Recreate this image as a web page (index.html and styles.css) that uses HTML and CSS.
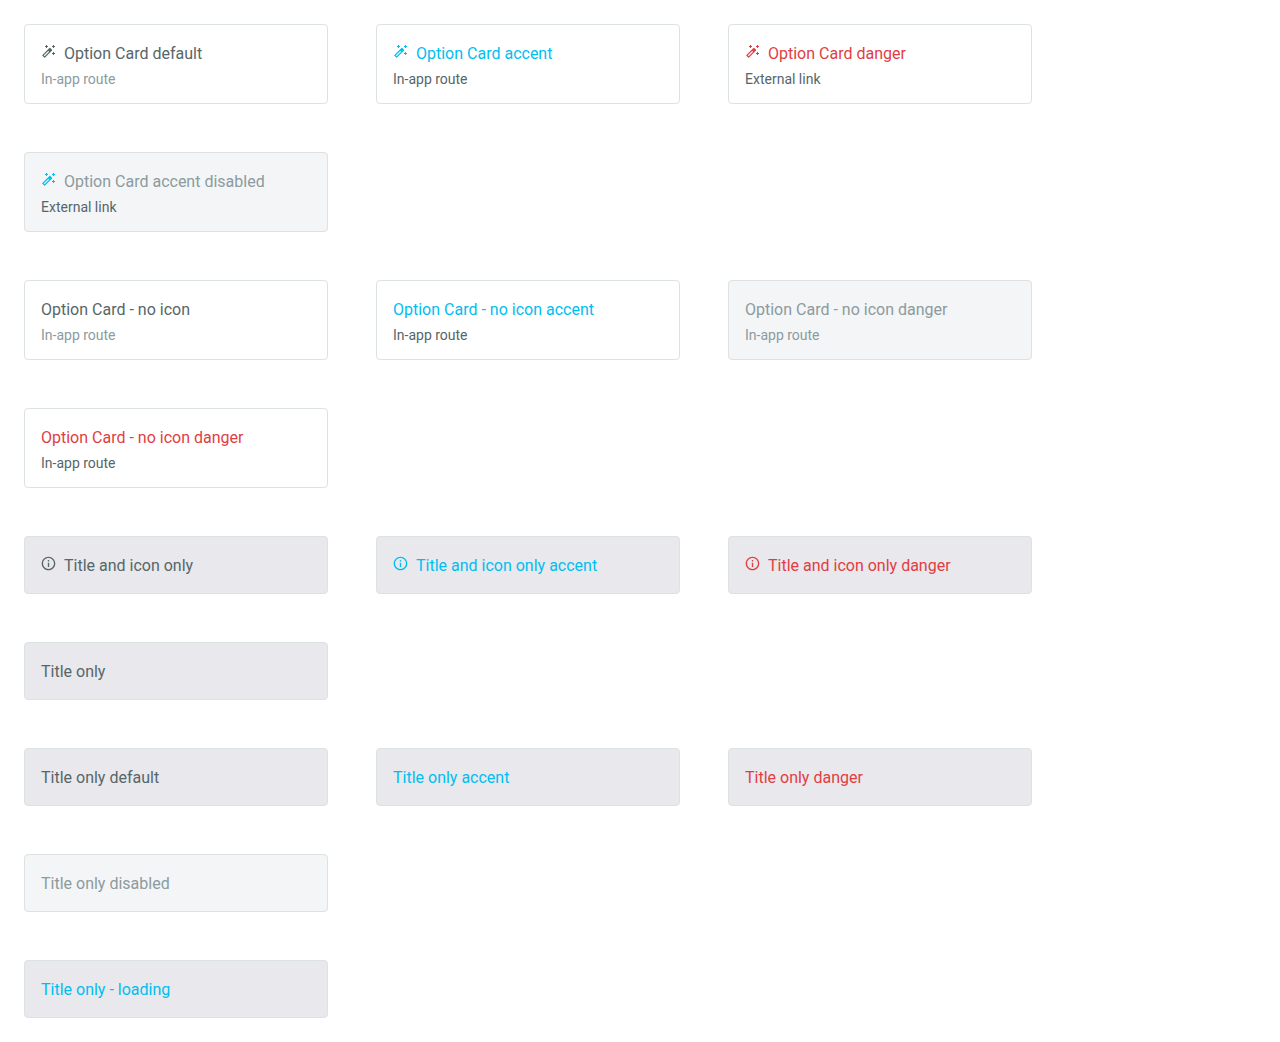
FILE: index.html
```html
<!DOCTYPE html>
<html lang="en">
<head>
<meta charset="utf-8">
<title>Option Cards</title>
<link rel="stylesheet" href="styles.css">
</head>
<body>
<svg class="sprite" aria-hidden="true">
  <symbol id="wand" viewBox="0 0 24 24">
    <path d="M17.710 9.120l-2.830-2.830C14.680 6.100 14.430 6 14.170 6c-.26 0-.51.1-.71.290L2.290 17.460c-.39.39-.39 1.020 0 1.410l2.830 2.830c.2.200.45.300.71.300s.51-.1.710-.290l11.170-11.170c.39-.39.39-1.030 0-1.420zM5.830 19.590l-1.410-1.410L11.590 11 13 12.410l-7.170 7.180z"/>
    <path d="M8 1.600h1.600v1.600h1.600v1.600H9.600v1.600H8V4.800H6.400V3.200H8zM19.200 1.600h1.600v1.600h1.600v1.600h-1.600v1.600h-1.600V4.800h-1.600V3.200h1.600zM19.200 12.800h1.600v1.600h1.600V16h-1.600v1.600h-1.600V16h-1.600v-1.600h1.600z"/>
  </symbol>
  <symbol id="info" viewBox="1 1 22 22"><path d="M11 7h2v2h-2zm0 4h2v6h-2zm1-9C6.480 2 2 6.480 2 12s4.480 10 10 10 10-4.480 10-10S17.520 2 12 2zm0 18c-4.410 0-8-3.590-8-8s3.590-8 8-8 8 3.590 8 8-3.590 8-8 8z"/></symbol>
</svg>
<main class="board">
  <div class="row">
    <a class="card" href="#"><span class="title"><svg class="icon"><use href="#wand"/></svg>Option Card default</span><span class="text muted">In-app route</span></a>
    <a class="card accent" href="#"><span class="title"><svg class="icon"><use href="#wand"/></svg>Option Card accent</span><span class="text">In-app route</span></a>
    <a class="card danger" href="#"><span class="title"><svg class="icon"><use href="#wand"/></svg>Option Card danger</span><span class="text">External link</span></a>
  </div>
  <div class="row">
    <a class="card accent disabled" href="#" aria-disabled="true"><span class="title"><svg class="icon"><use href="#wand"/></svg>Option Card accent disabled</span><span class="text">External link</span></a>
  </div>
  <div class="row">
    <a class="card" href="#"><span class="title">Option Card - no icon</span><span class="text muted">In-app route</span></a>
    <a class="card accent" href="#"><span class="title">Option Card - no icon accent</span><span class="text">In-app route</span></a>
    <a class="card disabled" href="#" aria-disabled="true"><span class="title">Option Card - no icon danger</span><span class="text muted">In-app route</span></a>
  </div>
  <div class="row">
    <a class="card danger" href="#"><span class="title">Option Card - no icon danger</span><span class="text">In-app route</span></a>
  </div>
  <div class="row">
    <button class="card filled" type="button"><span class="title"><svg class="icon"><use href="#info"/></svg>Title and icon only</span></button>
    <button class="card filled accent" type="button"><span class="title"><svg class="icon"><use href="#info"/></svg>Title and icon only accent</span></button>
    <button class="card filled danger" type="button"><span class="title"><svg class="icon"><use href="#info"/></svg>Title and icon only danger</span></button>
  </div>
  <div class="row">
    <button class="card filled" type="button"><span class="title">Title only</span></button>
  </div>
  <div class="row">
    <button class="card filled" type="button"><span class="title">Title only default</span></button>
    <button class="card filled accent" type="button"><span class="title">Title only accent</span></button>
    <button class="card filled danger" type="button"><span class="title">Title only danger</span></button>
  </div>
  <div class="row">
    <button class="card disabled" type="button" disabled><span class="title">Title only disabled</span></button>
  </div>
  <div class="row">
    <button class="card filled accent" type="button" aria-busy="true"><span class="title">Title only - loading</span></button>
  </div>
</main>
</body>
</html>
```
FILE: styles.css
```css
* {
  box-sizing: border-box;
}

body {
  margin: 0;
  background: #fff;
  font-family: Roboto, sans-serif;
}

.sprite {
  display: none;
}

.board {
  display: flex;
  flex-direction: column;
  gap: 48px;
  padding: 24px;
}

.row {
  display: flex;
  flex-wrap: wrap;
  gap: 48px;
}

.card {
  display: flex;
  flex-direction: column;
  width: 304px;
  max-width: 100%;
  padding: 16px 16px 14px;
  border: 1px solid #dce1e2;
  border-radius: 4px;
  background: #fff;
  color: #566669;
  font: inherit;
  text-align: left;
  text-decoration: none;
  cursor: pointer;
}

.title {
  display: flex;
  gap: 8px;
  font-size: 16px;
  line-height: 26px;
}

.text {
  padding-top: 2px;
  color: #566669;
  font-size: 14px;
  line-height: 20px;
}

.text.muted {
  color: #8b9b9e;
}

.icon {
  width: 15px;
  height: 15px;
  margin-top: 3px;
  fill: currentColor;
}

.accent {
  color: #00bef0;
}

.danger {
  color: #e23d42;
}

.filled {
  background: #e8e8ed;
}

.disabled {
  background: #f4f5f7;
  cursor: default;
}

.disabled .title {
  color: #8b9b9e;
}

.disabled .icon {
  color: #00bef0;
}
```
